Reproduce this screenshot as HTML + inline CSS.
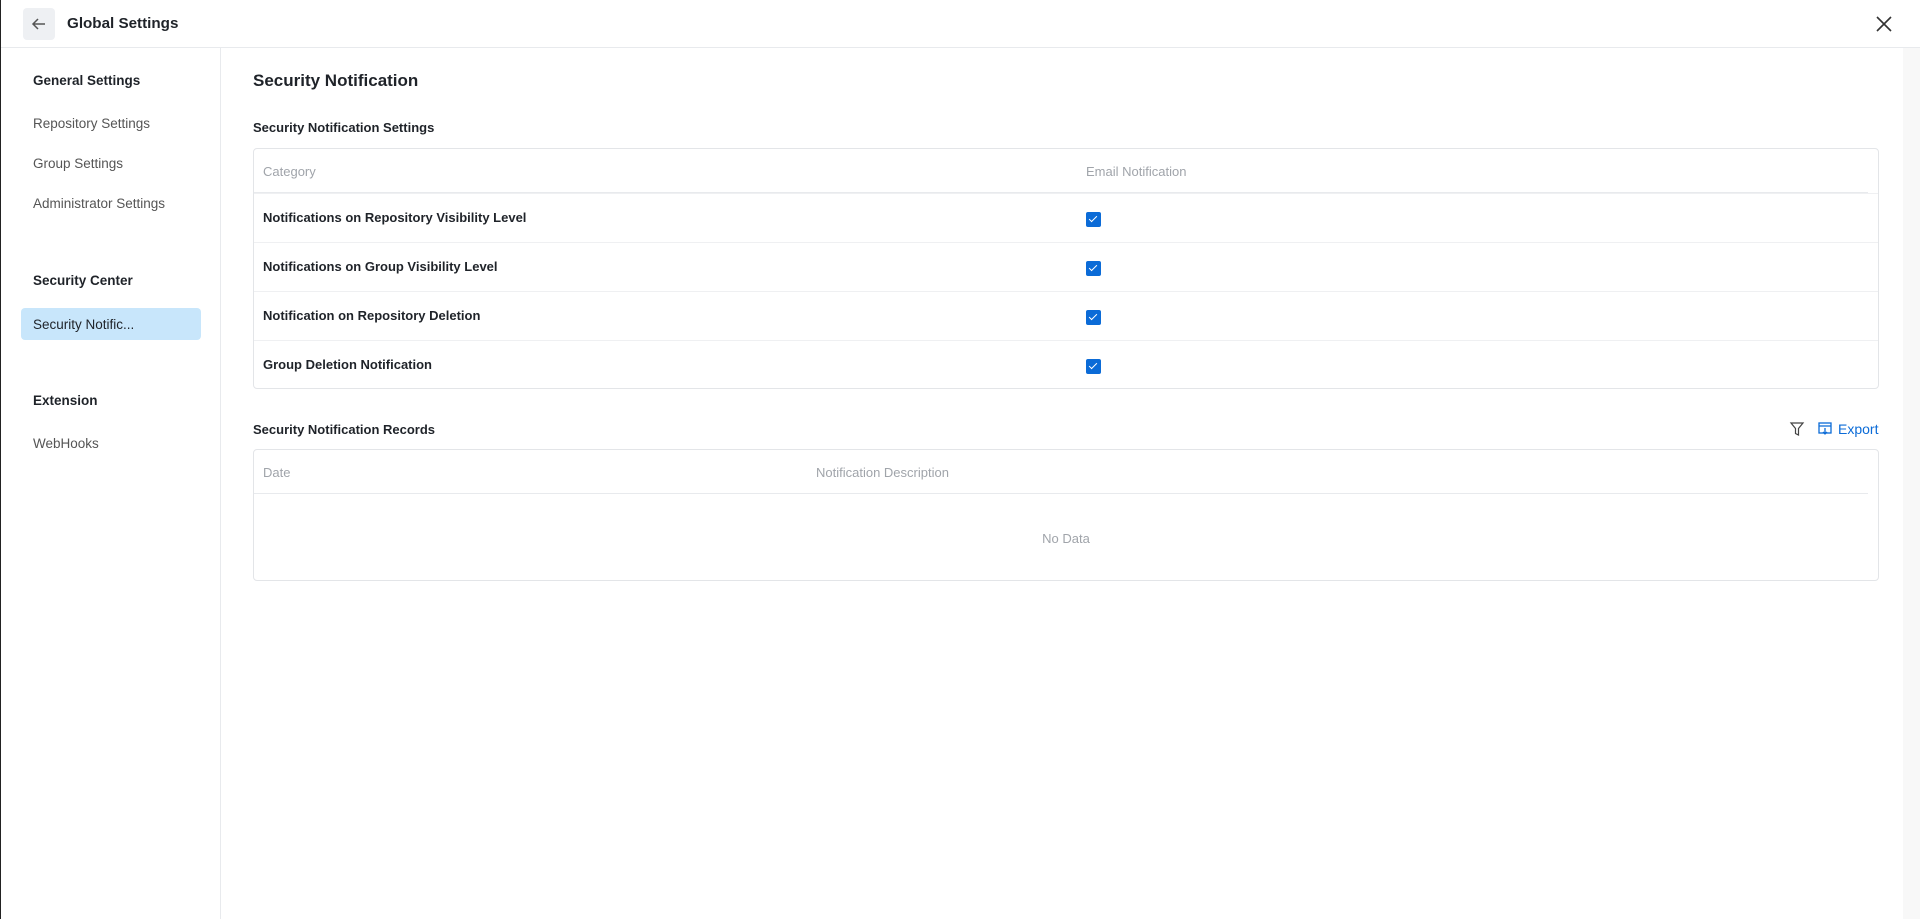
<!DOCTYPE html>
<html><head><meta charset="utf-8"><style>
*{box-sizing:border-box;margin:0;padding:0}
body{width:1920px;height:919px;overflow:hidden;background:#fff;font-family:"Liberation Sans",sans-serif;color:#1f2329;position:relative;border-left:1px solid #222}
.hdr{position:absolute;left:0;top:0;width:1920px;height:48px;border-bottom:1px solid #e8eaed}
.back{position:absolute;left:22px;top:8px;width:32px;height:32px;background:#eef0f3;border-radius:4px}
.title{position:absolute;left:66px;top:15px;font-size:15.2px;font-weight:bold}
.side{position:absolute;left:0;top:48px;width:220px;height:871px;border-right:1px solid #e8eaed}
.side div{position:absolute;left:32px;font-size:13.5px}
.g{font-weight:bold}
.it{color:#555}
.act{left:20px!important;width:180px;height:32px;background:#c8e6fb;border-radius:4px;padding:9px 0 0 12px}
.tbl{position:absolute;left:252px;width:1626px;border:1px solid #e3e5e8;border-radius:4px}
.th{height:44px;border-bottom:1px solid #e8eaed;margin-right:10px;position:relative;color:#a0a4aa;font-size:13px}
.th span{position:absolute;top:15px}
.row span{position:absolute;top:16px}
.row{height:49px;border-top:1px solid #eff0f2;position:relative;font-size:13px;font-weight:bold}
.row:first-of-type{border-top:none}
.cb{position:absolute;left:832px;top:18px;width:15px;height:15px;background:#0b6bd7;border-radius:2px}
.cb:after{content:"";position:absolute;left:5px;top:2px;width:3px;height:7px;border:solid #fff;border-width:0 1.5px 1.5px 0;transform:rotate(45deg)}
.sb{position:absolute;right:0;top:48px;width:17px;height:871px;background:#f8f8f8}
</style></head><body>
<div class="hdr">
<div class="back"><svg width="32" height="32" viewBox="0 0 32 32"><path d="M22 16H10M15 11l-5 5 5 5" stroke="#555" stroke-width="1.5" fill="none"/></svg></div>
<div class="title">Global Settings</div>
<svg style="position:absolute;left:1873px;top:14px" width="20" height="20" viewBox="0 0 20 20"><path d="M3 3L17 17M17 3L3 17" stroke="#333" stroke-width="1.6"/></svg>
</div>
<div class="side">
<div class="g" style="top:25px">General Settings</div>
<div class="it" style="top:68px">Repository Settings</div>
<div class="it" style="top:108px">Group Settings</div>
<div class="it" style="top:148px">Administrator Settings</div>
<div class="g" style="top:225px">Security Center</div>
<div class="act" style="top:260px">Security Notific...</div>
<div class="g" style="top:345px">Extension</div>
<div class="it" style="top:388px">WebHooks</div>
</div>
<div class="sb"></div>
<div style="position:absolute;left:252px;top:71px;font-size:17px;font-weight:bold">Security Notification</div>
<div style="position:absolute;left:252px;top:120px;font-size:13px;font-weight:bold">Security Notification Settings</div>
<div class="tbl" style="top:148px;height:241px">
<div class="th"><span style="left:9px">Category</span><span style="left:832px">Email Notification</span></div>
<div class="row"><span style="left:9px">Notifications on Repository Visibility Level</span><i class="cb"></i></div>
<div class="row"><span style="left:9px">Notifications on Group Visibility Level</span><i class="cb"></i></div>
<div class="row"><span style="left:9px">Notification on Repository Deletion</span><i class="cb"></i></div>
<div class="row"><span style="left:9px">Group Deletion Notification</span><i class="cb"></i></div>
</div>
<div style="position:absolute;left:252px;top:422px;font-size:13px;font-weight:bold">Security Notification Records</div>
<svg style="position:absolute;left:1788px;top:421px" width="16" height="16" viewBox="0 0 16 16"><path d="M2 2h12l-4.5 5.5V14l-3-1.5V7.5z" stroke="#444" stroke-width="1.2" fill="none"/></svg>
<svg style="position:absolute;left:1817px;top:422px" width="14" height="14" viewBox="0 0 14 14"><rect x="1" y="1" width="12" height="10" stroke="#0b6bd7" stroke-width="1.3" fill="none"/><path d="M1 4h12M7 6v6M5 10l2 2 2-2" stroke="#0b6bd7" stroke-width="1.3" fill="none"/></svg>
<div style="position:absolute;left:1837px;top:421px;font-size:14px;color:#0b6bd7">Export</div>
<div class="tbl" style="top:449px;height:132px">
<div class="th"><span style="left:9px">Date</span><span style="left:562px">Notification Description</span></div>
<div style="position:absolute;left:0;right:0;top:81px;text-align:center;font-size:13px;color:#a0a4aa">No Data</div>
</div>
</body></html>
